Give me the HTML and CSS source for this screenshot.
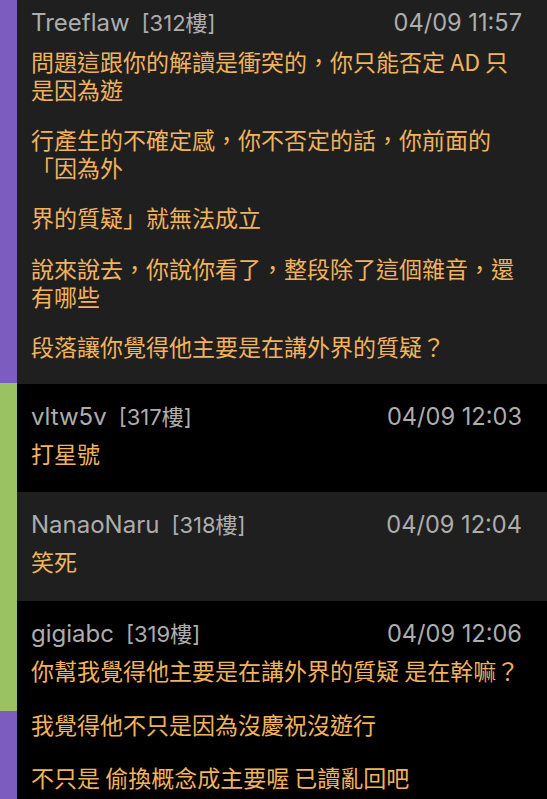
FILE: index.html
```html
<!DOCTYPE html>
<html lang="zh-Hant">
<head>
<meta charset="utf-8">
<title>Thread</title>
<link rel="stylesheet" href="styles.css">
</head>
<body>
<div class="screen">
  <div class="rail">
    <div class="seg seg-purple seg-top"></div>
    <div class="seg seg-green"></div>
    <div class="seg seg-purple seg-fill"></div>
  </div>
  <div class="posts">
    <div class="post post-gray post-first">
      <div class="meta">
        <span class="author">Treeflaw</span><span class="floor">[312樓]</span>
        <span class="time">04/09 11:57</span>
      </div>
      <div class="content">
        <p>問題這跟你的解讀是衝突的，你只能否定 AD 只<br>是因為遊</p>
        <p>行產生的不確定感，你不否定的話，你前面的<br>「因為外</p>
        <p>界的質疑」就無法成立</p>
        <p>說來說去，你說你看了，整段除了這個雜音，還<br>有哪些</p>
        <p>段落讓你覺得他主要是在講外界的質疑？</p>
      </div>
    </div>
    <div class="post post-black">
      <div class="meta">
        <span class="author">vltw5v</span><span class="floor">[317樓]</span>
        <span class="time">04/09 12:03</span>
      </div>
      <div class="content">
        <p>打星號</p>
      </div>
    </div>
    <div class="post post-gray">
      <div class="meta">
        <span class="author">NanaoNaru</span><span class="floor">[318樓]</span>
        <span class="time">04/09 12:04</span>
      </div>
      <div class="content">
        <p>笑死</p>
      </div>
    </div>
    <div class="post post-black post-last">
      <div class="meta">
        <span class="author">gigiabc</span><span class="floor">[319樓]</span>
        <span class="time">04/09 12:06</span>
      </div>
      <div class="content content-loose">
        <p>你幫我覺得他主要是在講外界的質疑 是在幹嘛？</p>
        <p>我覺得他不只是因為沒慶祝沒遊行</p>
        <p>不只是 偷換概念成主要喔 已讀亂回吧</p>
      </div>
    </div>
  </div>
</div>
</body>
</html>
```
FILE: styles.css
```css
html, body {
  margin: 0;
  padding: 0;
  background: #000;
}

body {
  width: 547px;
  height: 799px;
  overflow: hidden;
  font-family: "Inter", "Noto Sans CJK TC", sans-serif;
}

.screen {
  display: grid;
  grid-template-columns: 17px 1fr;
  height: 799px;
}

.rail {
  display: flex;
  flex-direction: column;
}

.seg-purple { background: #7c5cbf; }
.seg-green { background: #9bc262; height: 328px; }
.seg-top { height: 383px; }
.seg-fill { flex: 1; }

.posts {
  display: flex;
  flex-direction: column;
}

.post {
  padding: 19px 25px 25px 14px;
}

.post-gray { background: #1f1f1f; }
.post-black { background: #000; }

.post-first { padding-top: 9px; padding-bottom: 23px; }
.post-first .meta { margin-bottom: 11px; }
.post-last { flex: 1; }

.meta {
  display: flex;
  align-items: baseline;
  font-size: 23px;
  line-height: 28px;
  color: #adadad;
  margin-bottom: 9px;
}

.author {
  font-size: 24px;
  margin-right: 12px;
}

.floor {
  flex: 1;
  font-size: 22px;
}

.time {
  font-size: 23.6px;
  text-align: right;
}

.content {
  font-family: "Noto Sans CJK TC", "Inter", sans-serif;
  font-size: 23px;
  line-height: 27.6px;
  color: #f1b35b;
}

.content p {
  margin: 0 0 23px;
  white-space: nowrap;
}

.content p:last-child { margin-bottom: 0; }

.content-loose p { margin-bottom: 26px; }
```
